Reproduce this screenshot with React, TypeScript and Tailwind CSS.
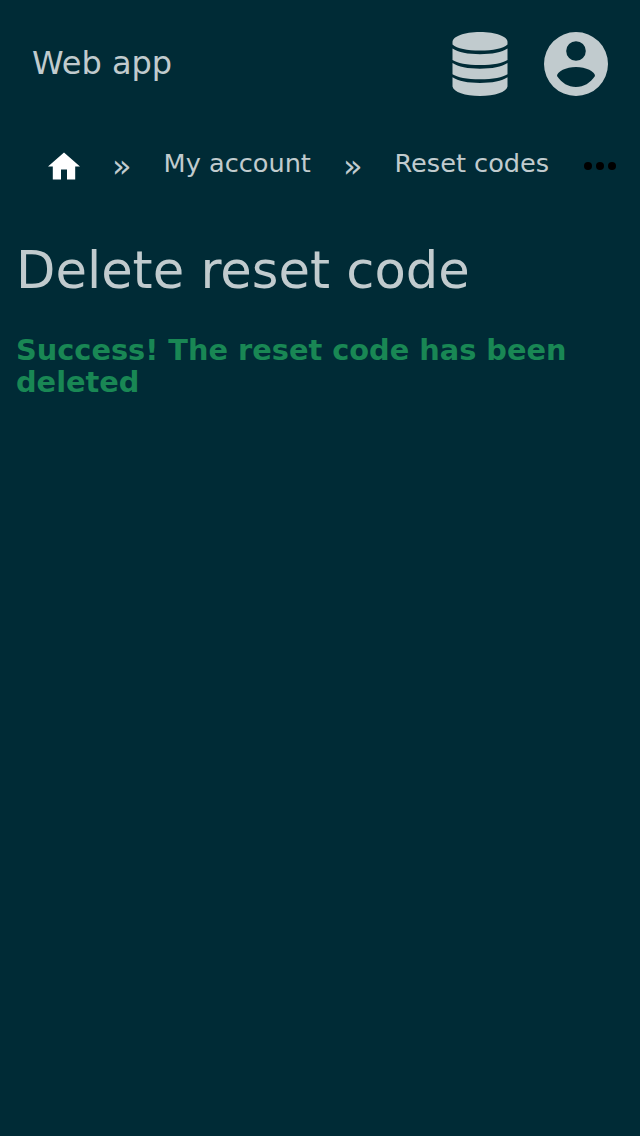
export default function App() {
  return (
    <div className="min-h-[1136px] w-[640px] bg-[#002b36] font-['DejaVu_Sans',sans-serif] text-[#c1cbce]">
      <header className="flex h-32 items-center justify-between px-8">
        <span className="pb-0.5 text-[32px] leading-none">Web app</span>
        <div className="flex items-center gap-8">
          <svg viewBox="0 0 64 64" className="size-16" fill="currentColor">
            <path d="M4.5 10C4.5 4.5 16 0 32 0s27.500 4.500 27.500 10v2.500C55 16.500 45 18.600 32 18.600S9 16.500 4.500 12.500Z" />
            <path d="M4.500 16.500C10 20.300 20 22.200 32 22.200s22-1.900 27.500-5.700V28C55 31 45 33 32 33S9 31 4.500 28Z" />
            <path d="M4.500 31C10 34.800 20 36.700 32 36.700s22-1.900 27.500-5.700V42.300C55 45.300 45 47.300 32 47.300S9 45.300 4.500 42.300Z" />
            <path d="M4.500 45.300C10 49.100 20 51 32 51s22-1.900 27.500-5.700V54.500C58.500 60 47 64 32 64S5.500 60 4.500 54.500Z" />
          </svg>
          <svg viewBox="0 0 64 64" className="size-16" fill="currentColor">
            <path fillRule="evenodd" d="M32 0a32 32 0 1 1 0 64a32 32 0 0 1 0-64ZM32 9.200a9.800 9.800 0 1 0 0 19.600a9.800 9.800 0 0 0 0-19.600ZM32 35C22 35 13 39.500 13 44C18 51 24 55 32 55S46 51 51 44C51 39.500 42 35 32 35Z" />
          </svg>
        </div>
      </header>
      <nav className="flex h-[72px] items-center gap-8 pl-12 text-[25.6px] leading-[30px]">
        <svg viewBox="0 0 32 32" className="mt-1 size-8 text-white" fill="currentColor">
          <path d="M16 2.500L32 16.500H27.200V29.500H19V19.500H13V29.500H4.800V16.500H0Z" />
        </svg>
        <span className="pt-1 text-[32px]">»</span>
        <span className="pb-0.5">My account</span>
        <span className="pt-1 text-[32px]">»</span>
        <span className="pb-0.5">Reset codes</span>
        <svg viewBox="0 0 32 8" className="ml-auto mr-6 mt-1 h-2 w-8 text-black" fill="currentColor">
          <circle cx="4" cy="4" r="4" /><circle cx="16" cy="4" r="4" /><circle cx="28" cy="4" r="4" />
        </svg>
      </nav>
      <main className="px-4">
        <h1 className="pt-10 text-[51.2px] leading-[60px]">Delete reset code</h1>
        <p className="mt-[34px] text-[28.8px] font-bold leading-8 text-[#198754]">Success! The reset code has been deleted</p>
      </main>
    </div>
  );
}
